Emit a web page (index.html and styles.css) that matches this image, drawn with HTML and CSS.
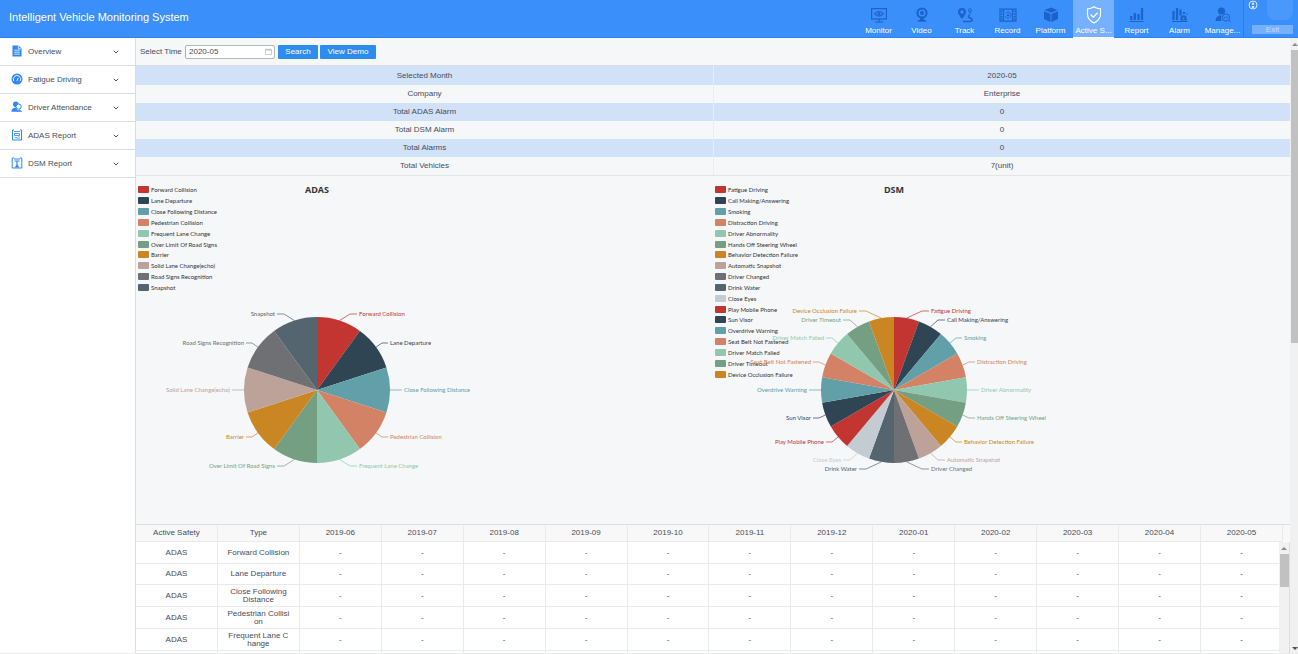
FILE: index.html
```html
<!DOCTYPE html>
<html lang="en">
<head>
<meta charset="utf-8">
<title>Intelligent Vehicle Monitoring System</title>
<link rel="stylesheet" href="styles.css">
</head>
<body>
<header class="topbar">
  <h1 class="brand">Intelligent Vehicle Monitoring System</h1>
  <nav class="nav">
    <a class="nav-item" href="#"><svg class="nav-icon" viewBox="0 0 18 18"><rect x="1.6" y="2.6" width="14.8" height="10.4" fill="none" stroke="currentColor" stroke-width="1.2"/><path d="M5 16h8M9 13v3" stroke="currentColor" stroke-width="1.2"/><path d="M4.6 7.8Q9 3.2 13.4 7.8Q9 12.4 4.6 7.8Z" fill="none" stroke="currentColor" stroke-width="1.2"/><circle cx="9" cy="7.8" r="1.5" fill="currentColor"/></svg><span>Monitor</span></a>
    <a class="nav-item" href="#"><svg class="nav-icon" viewBox="0 0 18 18"><circle cx="9" cy="7" r="4.600" fill="none" stroke="currentColor" stroke-width="2"/><circle cx="9" cy="7" r="2" fill="currentColor"/><path d="M7.500 12h3l.8 2.200h1.900v1.600H4.800v-1.600h1.900z" fill="currentColor"/></svg><span>Video</span></a>
    <a class="nav-item" href="#"><svg class="nav-icon" viewBox="0 0 18 18"><path d="M6 2a4 4 0 0 1 4 4c0 2.300-4 7-4 7s-4-4.700-4-7a4 4 0 0 1 4-4zm0 2.300a1.700 1.700 0 1 0 0 3.400 1.700 1.700 0 0 0 0-3.400z" fill="currentColor"/><path d="M7 15.500h6.500c3.500 0 3.300-2.800.8-3.500-2.600-.6-2-2.600-.6-2.700" fill="none" stroke="currentColor" stroke-width="1.500"/><circle cx="14" cy="4.300" r="1.500" fill="none" stroke="currentColor"/><path d="M14 6v2.500" stroke="currentColor"/></svg><span>Track</span></a>
    <a class="nav-item" href="#"><svg class="nav-icon" viewBox="0 0 18 18"><path d="M1 3.200h16v12H1zM4.500 3.200v12M13.500 3.200v12" fill="none" stroke="currentColor" stroke-width="1.200"/><path d="M2.700 4.500v10M15.300 4.500v10" stroke="currentColor" stroke-width="1.600" stroke-dasharray="1.500 1.200"/><path d="M6.600 7.300a3 3 0 1 1-.4 3" fill="none" stroke="currentColor"/><circle cx="9" cy="9.200" r="1.200" fill="currentColor"/></svg><span>Record</span></a>
    <a class="nav-item" href="#"><svg class="nav-icon" viewBox="0 0 18 18"><path d="M9 1.500l6.500 2.600L9 6.800 2.500 4.100zM2 5.200l6.500 2.700v8L2 13zM16 5.200L9.500 7.900v8L16 13z" fill="currentColor"/></svg><span>Platform</span></a>
    <a class="nav-item active" href="#"><svg class="nav-icon" viewBox="0 0 18 18"><path d="M9 .8c2 1.500 4 2 6.500 2v5.400c0 4-2.500 6.600-6.500 8.800C5 14.800 2.500 12.200 2.500 8.200V2.800C5 2.800 7 2.300 9 .8z" fill="none" stroke="currentColor" stroke-width="1.200"/><path d="M5.600 8.500l2.600 2.600 4.500-4.400" fill="none" stroke="currentColor" stroke-width="1.300"/></svg><span>Active S...</span></a>
    <a class="nav-item" href="#"><svg class="nav-icon" viewBox="0 0 18 18"><path d="M3.300 10v4M6.800 7v7M10.500 8v6M14 2v12" stroke="currentColor" stroke-width="2.200"/><path d="M1.500 15.500h14" stroke="currentColor"/></svg><span>Report</span></a>
    <a class="nav-item" href="#"><svg class="nav-icon" viewBox="0 0 18 18"><path d="M2.500 5v9M6 2v12M9.500 3.500v6M13 6v2" stroke="currentColor" stroke-width="2.200"/><path d="M1 15.500h15.500" stroke="currentColor"/><path d="M9.300 14.500v-2a3.200 3.200 0 0 1 6.400 0v2z" fill="currentColor"/><circle cx="12.500" cy="12.500" r="1" fill="#3a8ffb"/><path d="M15 8.500l1.500-1M9 8l1 1.200" stroke="currentColor"/></svg><span>Alarm</span></a>
    <a class="nav-item" href="#"><svg class="nav-icon" viewBox="0 0 18 18"><circle cx="7.500" cy="5" r="3.600" fill="currentColor"/><path d="M1.500 15c0-3.500 2-5.400 5.500-5.800 1.500 1-1 2.300.8 5.800z" fill="currentColor"/><circle cx="12" cy="11.500" r="3.600" fill="none" stroke="currentColor"/><path d="M14.800 14.200l2 1.800M9.800 12.500l1.700-1.500 1.200 1 1.500-1" stroke="currentColor" fill="none"/></svg><span>Manage...</span></a>
  </nav>
  <div class="user">
    <div class="user-row">
      <svg class="user-icon" viewBox="0 0 10 10"><circle cx="5" cy="5" r="4" fill="none" stroke="currentColor"/><circle cx="5" cy="3.800" r="1.200" fill="currentColor"/><path d="M3.800 8V6h2.400v2z" fill="currentColor"/></svg>
      <span class="avatar"></span>
    </div>
    <button class="exit" type="button">Exit</button>
  </div>
</header>
<div class="shell">
  <aside class="sidebar">
    <a class="side-item" href="#"><svg class="side-icon" viewBox="0 0 12 12"><path d="M1.500.5h6l3 3v8h-9z" fill="currentColor"/><path d="M3.200 5.200h5.600M3.200 7.200h5.600M3.200 9.200h5.600M7.300.8v3h3" stroke="#fff" stroke-width=".8" fill="none"/></svg><span>Overview</span><svg class="chev" viewBox="0 0 6 6"><path d="M.8 1.800L3 4l2.200-2.200" fill="none" stroke="currentColor"/></svg></a>
    <a class="side-item" href="#"><svg class="side-icon" viewBox="0 0 12 12"><circle cx="6" cy="6" r="5.500" fill="currentColor"/><path d="M2.800 8a3.700 3.700 0 1 1 6.400 0M5.800 8.200l1.400-3.400" fill="none" stroke="#fff" stroke-width=".9"/></svg><span>Fatigue Driving</span><svg class="chev" viewBox="0 0 6 6"><path d="M.8 1.800L3 4l2.200-2.200" fill="none" stroke="currentColor"/></svg></a>
    <a class="side-item" href="#"><svg class="side-icon" viewBox="0 0 12 12"><circle cx="4.800" cy="3.200" r="2.800" fill="currentColor"/><path d="M.4 10.800c0-2.600 1.600-4 4.400-4.300l3 4.300z" fill="currentColor"/><circle cx="7.600" cy="5.600" r="2.600" fill="#fff" stroke="currentColor"/><path d="M8.500 8.500l3 2.300H5.800z" fill="currentColor"/></svg><span>Driver Attendance</span><svg class="chev" viewBox="0 0 6 6"><path d="M.8 1.800L3 4l2.200-2.200" fill="none" stroke="currentColor"/></svg></a>
    <a class="side-item" href="#"><svg class="side-icon" viewBox="0 0 12 12"><path d="M3 1H1.500v10h9V1H9" fill="none" stroke="currentColor"/><path d="M3 2.500h6M3.500 4.500h5v2h-5zM5 8.500l3.500 1M3.500 8l1.500 1.500M7 6.500l1.500 2" fill="none" stroke="currentColor" stroke-width=".8"/></svg><span>ADAS Report</span><svg class="chev" viewBox="0 0 6 6"><path d="M.8 1.800L3 4l2.200-2.200" fill="none" stroke="currentColor"/></svg></a>
    <a class="side-item" href="#"><svg class="side-icon" viewBox="0 0 12 12"><path d="M3 1H1.200v10h9.600V1H9" fill="none" stroke="currentColor"/><path d="M3 2h6M3.500 4h5M6 4v5" fill="none" stroke="currentColor" stroke-width="1.200"/><path d="M3.500 10.500L6 7.500l2.500 3z" fill="currentColor"/></svg><span>DSM Report</span><svg class="chev" viewBox="0 0 6 6"><path d="M.8 1.800L3 4l2.200-2.200" fill="none" stroke="currentColor"/></svg></a>
  </aside>
  <main class="main">
    <form class="toolbar">
      <label for="month">Select Time</label>
      <span class="date-field">
        <input id="month" type="text" value="2020-05">
        <svg class="cal" viewBox="0 0 7 7"><path d="M.5 1.500h6v5h-6zM.5 2.200h6M2 .5v1M5 .5v1" fill="none" stroke="currentColor" stroke-width=".7"/></svg>
      </span>
      <button class="btn search" type="button">Search</button>
      <button class="btn demo" type="button">View Demo</button>
    </form>
    <table class="summary">
      <tbody>
        <tr><th scope="row">Selected Month</th><td>2020-05</td></tr>
        <tr><th scope="row">Company</th><td>Enterprise</td></tr>
        <tr><th scope="row">Total ADAS Alarm</th><td>0</td></tr>
        <tr><th scope="row">Total DSM Alarm</th><td>0</td></tr>
        <tr><th scope="row">Total Alarms</th><td>0</td></tr>
        <tr><th scope="row">Total Vehicles</th><td>7(unit)</td></tr>
      </tbody>
    </table>
    <div class="charts">
      <section class="chart" id="adas"></section>
      <section class="chart" id="dsm"></section>
    </div>
    <div class="detail">
      <table class="grid">
        <thead><tr id="months"><th scope="col">Active Safety</th><th scope="col">Type</th></tr></thead>
        <tbody id="rows"></tbody>
      </table>
      <div class="grid-scroll"><span class="arrow up"></span><span class="thumb"></span></div>
    </div>
  </main>
  <div class="page-scroll"><span class="arrow up"></span><span class="page-thumb"></span><span class="arrow down"></span></div>
</div>
<script src="app.js"></script>
</body>
</html>
```

FILE: styles.css
```css
* { box-sizing: border-box; }

body {
  margin: 0;
  height: 100vh;
  display: flex;
  flex-direction: column;
  overflow: hidden;
  background: #fff;
  color: #464c5b;
  font: 8px/12px "Liberation Sans", Arial, sans-serif;
}

a { color: inherit; text-decoration: none; }
button, input { font: inherit; }

.topbar {
  flex: none;
  display: flex;
  height: 38px;
  background: #3a8ffb;
  border-bottom: 1px solid #2d82f0;
  color: #fff;
}
.brand {
  flex: 1;
  margin: 0;
  padding-left: 9px;
  font-size: 11px;
  font-weight: 400;
  line-height: 35px;
}
.nav { display: flex; gap: 2px; border-right: 1px solid #2b7eea; }
.nav-item {
  width: 41px;
  height: 38px;
  padding-top: 6px;
  display: flex;
  flex-direction: column;
  align-items: center;
  white-space: nowrap;
}
.nav-icon { width: 18px; height: 18px; margin-bottom: 1px; color: #1c62c8; }
.nav-item.active { background: #75b1fc; border-bottom: 1px solid #fff; }
.nav-item.active .nav-icon { color: #fff; }
.user { width: 54px; padding: 0 5px 0 4px; color: #d5e7ff; }
.user-row { display: flex; justify-content: space-between; height: 25px; }
.user-icon { width: 10px; height: 10px; }
.avatar { width: 26px; height: 20px; border-radius: 0 0 8px 8px; background: #4a98fb; }
.exit {
  display: block;
  width: 41px;
  height: 9px;
  margin-left: auto;
  padding: 0;
  border: 0;
  background: #75b0fc;
  color: #c4defe;
  line-height: 9px;
}

.shell { flex: 1; display: flex; min-height: 0; border-bottom: 1px solid #e8eaec; }

.sidebar { flex: none; width: 136px; border-right: 1px solid #dcdee2; }
.side-item {
  display: flex;
  align-items: center;
  height: 28px;
  padding: 1px 16px 0 11px;
  border-bottom: 1px solid #dcdee2;
}
.side-item span { flex: 1; }
.side-icon { width: 12px; height: 12px; margin: 0 5px 3px 0; color: #2f86f6; }
.chev { width: 6px; height: 6px; }

.main { flex: 1; min-width: 0; display: flex; flex-direction: column; background: #f5f7f9; }
.toolbar {
  flex: none;
  display: flex;
  align-items: center;
  height: 28px;
  padding-left: 4px;
  border-bottom: 1px solid #dcdee2;
}
.toolbar label { width: 45px; }
.date-field { display: flex; position: relative; margin-right: 3px; }
.date-field input {
  width: 90px;
  height: 14px;
  padding: 0 3px;
  border: 1px solid #b4b6ba;
  border-radius: 2px;
  background: #fff;
  color: #464c5b;
}
.cal { position: absolute; top: 3px; right: 3px; width: 7px; height: 7px; color: #b4b7be; }
.btn {
  height: 14px;
  padding: 0;
  border: 0;
  border-radius: 1px;
  background: #2d8cf0;
  color: #fff;
}
.search { width: 40px; margin-right: 2px; }
.demo { width: 56px; }

.summary { flex: none; width: 100%; border-spacing: 0; table-layout: fixed; border-bottom: 1px solid #e3e5e8; }
.summary th, .summary td { height: 18px; padding: 0; font-weight: 400; text-align: center; }
.summary tr:first-child > * { height: 19px; }
.summary td { border-left: 1px solid #e8eef6; }
.summary tr:nth-child(odd) { background: #d1e1f7; }

.charts { flex: none; display: grid; grid-template-columns: 1fr 1fr; height: 348px; }
.chart { display: grid; align-items: start; justify-content: start; }
.chart > * { grid-area: 1 / 1; }
.chart-title {
  width: 362px;
  margin: 0;
  padding-top: 8px;
  color: #333;
  font: 700 9px/12px "Open Sans", "Noto Sans", sans-serif;
  text-align: center;
}
.pie { width: 362px; height: 347px; overflow: visible; font: 6px Lato, "Noto Sans", sans-serif; }
.legend {
  margin: 0;
  padding: 8px 0 0 2px;
  list-style: none;
  color: #333;
  font: 6px/11px Lato, "Noto Sans", sans-serif;
}
.legend li { display: flex; align-items: center; gap: 2px; height: 11px; }
.legend li:nth-child(6n) { height: 10px; }
.swatch { width: 11px; height: 7px; border-radius: 1px; }

.detail {
  flex: 1;
  min-height: 0;
  position: relative;
  overflow: hidden;
  background: linear-gradient(#f8f8f9 16px, #fff 16px);
  border-top: 1px solid #dcdee2;
}
.grid { width: calc(100% - 7px); table-layout: fixed; border-spacing: 0; line-height: 8px; }
.grid th, .grid td {
  padding: 0;
  border: 0 solid #e8eaec;
  border-width: 0 1px 1px 0;
  font-weight: 400;
  text-align: center;
  white-space: pre-line;
}
.grid th { height: 17px; background: #f8f8f9; }
.grid td { height: 22px; background: #fff; }
.grid tr:nth-child(2) td { height: 21px; }
.grid-scroll {
  position: absolute;
  top: 17px;
  right: 0;
  bottom: 0;
  width: 11px;
  display: flex;
  flex-direction: column;
  align-items: center;
  background: #f1f1f1;
  border-right: 1px solid #dcdee2;
}
.thumb { width: 9px; height: 33px; background: #c1c1c1; }
.page-scroll {
  flex: none;
  width: 8px;
  display: flex;
  flex-direction: column;
  align-items: center;
  background: #f1f1f1;
  padding-left: 1px;
}
.page-thumb { width: 100%; height: 293px; margin-bottom: auto; background: #c1c1c1; }
.arrow { flex: none; width: 0; height: 0; border: 3px solid transparent; }
.up { margin: 2px 0 4px; border-top-width: 0; border-bottom-color: #8a8a8a; }
.grid-scroll .up { margin-top: 5px; }
.page-scroll .up { margin-top: 5px; }
.down { margin-bottom: 3px; border-bottom-width: 0; border-top-color: #505050; }
```

FILE: app.js
```js
const palette = ['#c23531', '#2f4554', '#61a0a8', '#d48265', '#91c7ae', '#749f83',
  '#ca8622', '#bda29a', '#6e7074', '#546570', '#c4ccd3'];

const CX = 181, CY = 214, R = 73;

// Each label slot, clockwise on the right half: offsets from the centre
// of the line's bend, the line's end, and the label's height.
const charts = {
  adas: {
    title: 'ADAS',
    names: ['Forward Collision', 'Lane Departure', 'Close Following Distance',
      'Pedestrian Collision', 'Frequent Lane Change', 'Over Limit Of Road Signs',
      'Barrier', 'Solid Lane Change(echo)', 'Road Signs Recognition', 'Snapshot'],
    slots: [[33, 40, -76], [65, 71, -47], [80, 85, 0], [65, 71, 47], [33, 40, 76]]
  },
  dsm: {
    title: 'DSM',
    names: ['Fatigue Driving', 'Call Making/Answering', 'Smoking', 'Distraction Driving',
      'Driver Abnormality', 'Hands Off Steering Wheel', 'Behavior Detection Failure',
      'Automatic Snapshot', 'Driver Changed', 'Drink Water', 'Close Eyes',
      'Play Mobile Phone', 'Sun Visor', 'Overdrive Warning', 'Seat Belt Not Fastened',
      'Driver Match Failed', 'Driver Timeout', 'Device Occlusion Failure'],
    slots: [[28, 35, -79], [44, 51, -70], [62, 68, -52], [75, 81, -28], [80, 85, 0],
      [75, 81, 28], [62, 68, 52], [44, 51, 70], [28, 35, 79]]
  }
};

const point = (angle) => [CX + R * Math.sin(angle), CY - R * Math.cos(angle)];

function drawChart(id, { title, names, slots }) {
  const n = names.length;
  const color = (i) => palette[i % palette.length];
  const step = 2 * Math.PI / n;
  const slices = names.map((name, i) => {
    const a = point(i * step), b = point((i + 1) * step), m = point((i + 0.5) * step);
    const right = i < n / 2;
    const side = right ? 1 : -1;
    const [bend, end, dy] = slots[right ? i : n - 1 - i];
    const y = CY + dy;
    return `<path d="M${CX} ${CY}L${a}A${R} ${R} 0 0 1 ${b}Z" fill="${color(i)}"/>
      <polyline points="${m} ${CX + side * bend},${y} ${CX + side * end},${y}" fill="none" stroke="${color(i)}" stroke-width="0.7"/>
      <text x="${CX + side * (end + 2)}" y="${y + 2}" fill="${color(i)}" text-anchor="${right ? 'start' : 'end'}">${name}</text>`;
  }).join('');
  const legend = names.map((name, i) =>
    `<li><span class="swatch" style="background:${color(i)}"></span>${name}</li>`).join('');
  document.getElementById(id).innerHTML =
    `<h2 class="chart-title">${title}</h2><ul class="legend">${legend}</ul>
     <svg class="pie" viewBox="0 0 362 347">${slices}</svg>`;
}

Object.entries(charts).forEach(([id, chart]) => drawChart(id, chart));

const months = ['2019-06', '2019-07', '2019-08', '2019-09', '2019-10', '2019-11',
  '2019-12', '2020-01', '2020-02', '2020-03', '2020-04', '2020-05'];
const types = ['Forward Collision', 'Lane Departure', 'Close Following\nDistance',
  'Pedestrian Collisi\non', 'Frequent Lane C\nhange', ''];

document.getElementById('months').insertAdjacentHTML('beforeend',
  months.map((m) => `<th scope="col">${m}</th>`).join(''));
document.getElementById('rows').innerHTML = types.map((type) =>
  `<tr><td>${type && 'ADAS'}</td><td>${type}</td>${months.map(() => `<td>${type && '-'}</td>`).join('')}</tr>`).join('');
```
